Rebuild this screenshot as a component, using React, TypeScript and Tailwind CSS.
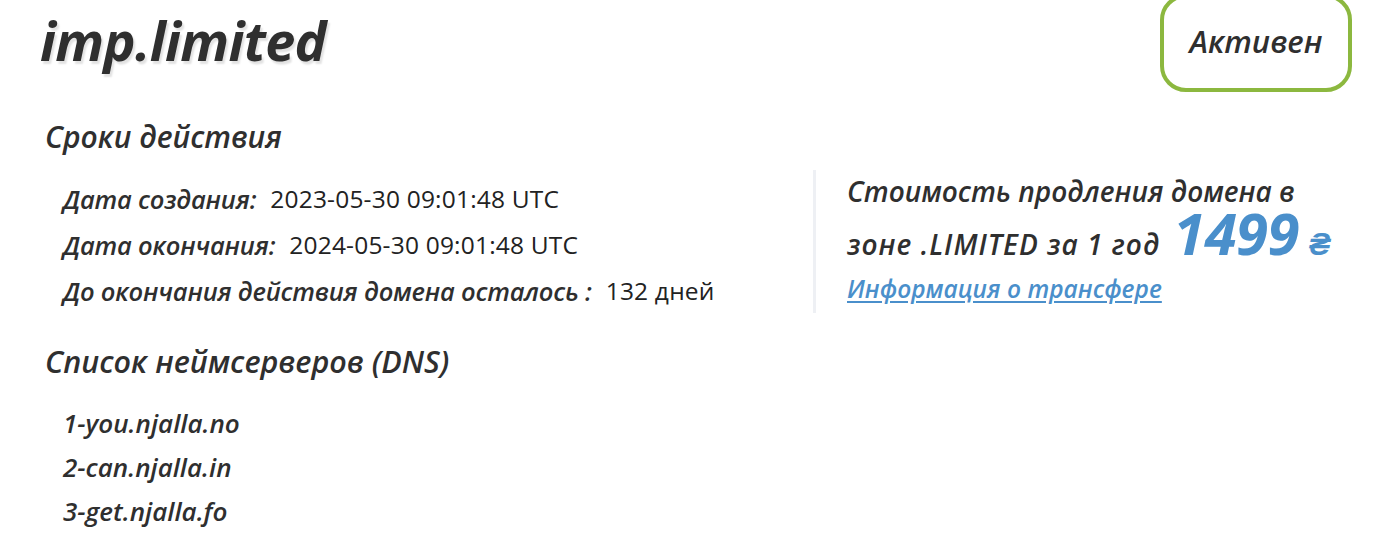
const rows = [
  { label: 'Дата создания:', value: '2023-05-30 09:01:48 UTC' },
  { label: 'Дата окончания:', value: '2024-05-30 09:01:48 UTC' },
  { label: 'До окончания действия домена осталось :', value: '132 дней' },
];

const nameservers = ['1-you.njalla.no', '2-can.njalla.in', '3-get.njalla.fo'];

export default function App() {
  return (
    <div className="min-h-[538px] w-full bg-white font-['Open_Sans',sans-serif] text-[#2f2f2f]">
      <div className="flex items-start justify-between pl-[40px] pr-[36px]">
        <h1 className="pt-[4px] text-[54px] font-bold italic leading-[72px] tracking-[-0.7px] [text-shadow:2px_3px_2px_#e2e2e2]">
          imp.limited
        </h1>
        <div className="-mt-[6px] flex h-[98px] w-[192px] items-center justify-center rounded-[26px] border-[4px] border-[#8cb83f] pb-[4px] text-[31px] font-semibold italic">
          Активен
        </div>
      </div>

      <div className="flex items-start pl-[45px]">
        <div className="w-[768px]">
          <h2 className="mt-[25px] text-[30px] font-semibold italic leading-[40px]">Сроки действия</h2>
          <div className="mt-[26px] flex flex-col gap-[14px] pl-[18px]">
            {rows.map((r) => (
              <div key={r.label} className="flex items-center leading-[32px]">
                <span className="text-[25.5px] font-semibold italic tracking-[-0.2px]">{r.label}</span>
                <span className="ml-[14px] text-[24.5px] tracking-[0.2px] text-[#222]">{r.value}</span>
              </div>
            ))}
          </div>
        </div>

        <div className="mt-[78px] h-[143px] border-l-[3px] border-[#eef0f4] pl-[31px]">
          <p className="pt-[3px] text-[28px] font-semibold italic leading-[36px]">Стоимость продления домена в</p>
          <p className="mt-[17px] text-[28px] font-semibold italic leading-[36px]">
            <span className="tracking-[1px]">зоне .LIMITED за 1 год</span>
            <span className="ml-[13px] text-[58px] font-bold leading-[0] tracking-[-0.5px] text-[#4a8fcb]">1499</span>
            <span className="ml-[10px] text-[32px] font-bold leading-[0] text-[#4a8fcb]">₴</span>
          </p>
          <a href="#" className="mt-[12px] block text-[24.5px] font-semibold italic leading-[30px] text-[#4a8fcb] underline underline-offset-[3px]">
            Информация о трансфере
          </a>
        </div>
      </div>

      <div className="pl-[45px]">
        <h2 className="mt-[28px] text-[30.5px] font-semibold italic leading-[40px]">Список неймсерверов (DNS)</h2>
        <ul className="mt-[26px] flex flex-col gap-[12px] pl-[18px]">
          {nameservers.map((n) => (
            <li key={n} className="text-[26px] font-semibold italic leading-[32px]">{n}</li>
          ))}
        </ul>
      </div>
    </div>
  );
}
